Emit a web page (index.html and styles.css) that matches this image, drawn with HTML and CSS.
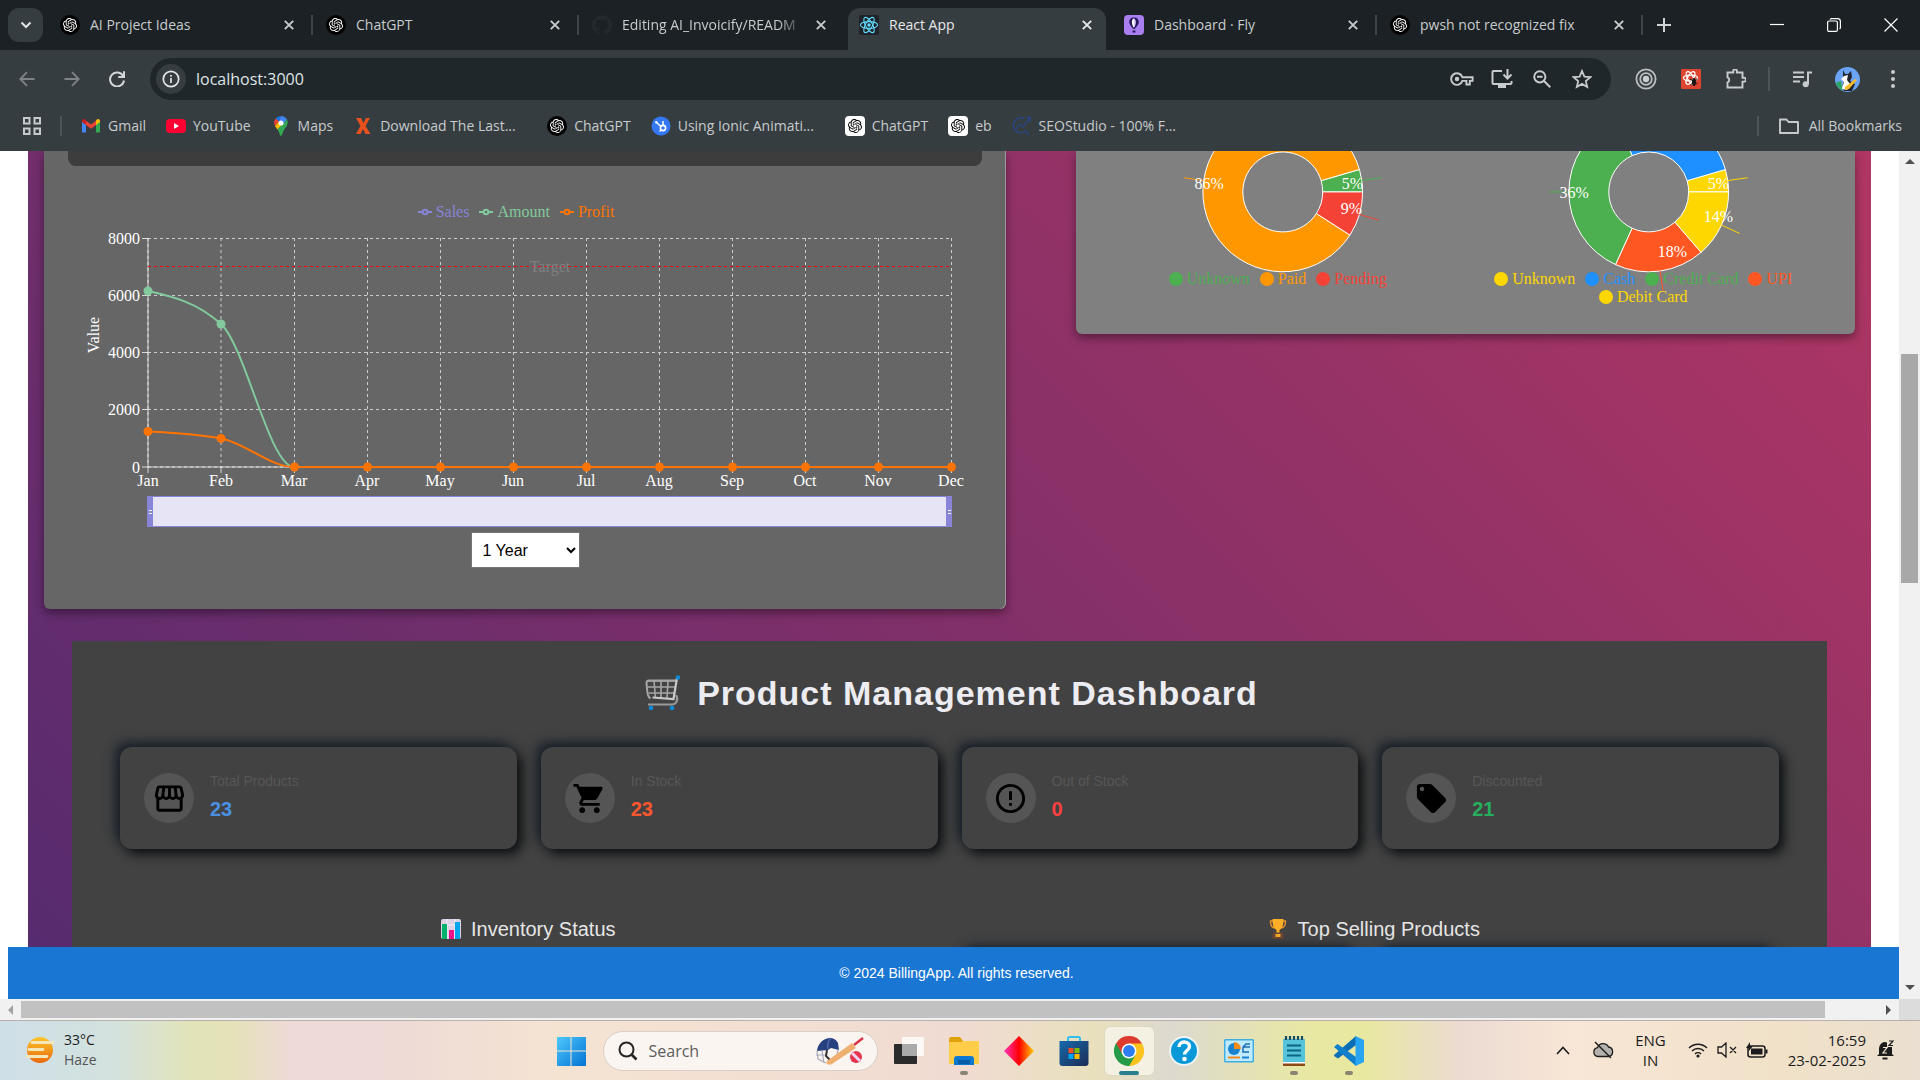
FILE: index.html
```html
<!DOCTYPE html>
<html lang="en">
<head>
<meta charset="utf-8">
<title>React App</title>
<link rel="stylesheet" href="styles.css">
</head>
<body>
<svg class="defs" aria-hidden="true">
  <symbol id="openai" viewBox="0 0 24 24"><path fill="currentColor" d="M22.2819 9.8211a5.9847 5.9847 0 0 0-.5157-4.9108 6.0462 6.0462 0 0 0-6.5098-2.9A6.0651 6.0651 0 0 0 4.9807 4.1818a5.9847 5.9847 0 0 0-3.9977 2.9 6.0462 6.0462 0 0 0 .7427 7.0966 5.98 5.98 0 0 0 .511 4.9107 6.051 6.051 0 0 0 6.5146 2.9001A5.9847 5.9847 0 0 0 13.2599 24a6.0557 6.0557 0 0 0 5.7718-4.2058 5.9894 5.9894 0 0 0 3.9977-2.9001 6.0557 6.0557 0 0 0-.7475-7.0729zm-9.022 12.6081a4.4755 4.4755 0 0 1-2.8764-1.0408l.1419-.0804 4.7783-2.7582a.7948.7948 0 0 0 .3927-.6813v-6.7369l2.02 1.1686a.071.071 0 0 1 .038.052v5.5826a4.504 4.504 0 0 1-4.4945 4.4944zm-9.6607-4.1254a4.4708 4.4708 0 0 1-.5346-3.0137l.142.0852 4.783 2.7582a.7712.7712 0 0 0 .7806 0l5.8428-3.3685v2.3324a.0804.0804 0 0 1-.0332.0615L9.74 19.9502a4.4992 4.4992 0 0 1-6.1408-1.6464zM2.3408 7.8956a4.485 4.485 0 0 1 2.3655-1.9728V11.6a.7664.7664 0 0 0 .3879.6765l5.8144 3.3543-2.0201 1.1685a.0757.0757 0 0 1-.071 0l-4.8303-2.7865A4.504 4.504 0 0 1 2.3408 7.872zm16.5963 3.8558L13.1038 8.364 15.1192 7.2a.0757.0757 0 0 1 .071 0l4.8303 2.7913a4.4944 4.4944 0 0 1-.6765 8.1042v-5.6772a.79.79 0 0 0-.407-.667zm2.0107-3.0231l-.142-.0852-4.7735-2.7818a.7759.7759 0 0 0-.7854 0L9.409 9.2297V6.8974a.0662.0662 0 0 1 .0284-.0615l4.8303-2.7866a4.4992 4.4992 0 0 1 6.6802 4.66zM8.3065 12.863l-2.02-1.1638a.0804.0804 0 0 1-.038-.0567V6.0742a4.4992 4.4992 0 0 1 7.3757-3.4537l-.142.0805L8.704 5.459a.7948.7948 0 0 0-.3927.6813zm1.0976-2.3654l2.602-1.4998 2.6069 1.4998v2.9994l-2.5974 1.4997-2.6067-1.4997Z"/></symbol>
  <symbol id="chatgpt" viewBox="0 0 20 20"><circle cx="10" cy="10" r="10" fill="#000"/><use href="#openai" x="3" y="3" width="14" height="14"/></symbol>
  <symbol id="chatgpt-light" viewBox="0 0 20 20"><rect width="20" height="20" rx="4" fill="#fff"/><use href="#openai" x="3" y="3" width="14" height="14"/></symbol>
  <symbol id="cross" viewBox="0 0 10 10"><path d="M.8.8l8.4 8.4M9.2.8L.8 9.2" stroke="currentColor" stroke-width="1.9" fill="none"/></symbol>
</svg>

<header class="chrome">
  <div class="tabstrip">
    <button class="tab-search" aria-label="Search tabs"><svg width="12" height="8" viewBox="0 0 12 8"><path d="M1.500 1.500L6 6l4.500-4.500" fill="none" stroke="#dfe3e4" stroke-width="2"/></svg></button>
    <div class="tab"><svg class="fav pale"><use href="#chatgpt"/></svg><span class="tab-title">AI Project Ideas</span><button class="tab-close" aria-label="Close tab"><svg><use href="#cross"/></svg></button></div>
    <div class="tab"><svg class="fav pale"><use href="#chatgpt"/></svg><span class="tab-title">ChatGPT</span><button class="tab-close" aria-label="Close tab"><svg><use href="#cross"/></svg></button></div>
    <div class="tab plain"><svg class="fav" viewBox="0 0 24 24"><path fill="#24292e" d="M12 .297c-6.63 0-12 5.373-12 12 0 5.303 3.438 9.800 8.205 11.385.6.113.82-.258.82-.577 0-.285-.01-1.040-.015-2.040-3.338.724-4.042-1.610-4.042-1.610C4.422 18.070 3.633 17.700 3.633 17.700c-1.087-.744.084-.729.084-.729 1.205.084 1.838 1.236 1.838 1.236 1.070 1.835 2.809 1.305 3.495.998.108-.776.417-1.305.76-1.605-2.665-.3-5.466-1.332-5.466-5.930 0-1.310.465-2.380 1.235-3.220-.135-.303-.54-1.523.105-3.176 0 0 1.005-.322 3.300 1.230.96-.267 1.980-.399 3-.405 1.020.006 2.040.138 3 .405 2.280-1.552 3.285-1.230 3.285-1.230.645 1.653.24 2.873.12 3.176.765.84 1.230 1.910 1.230 3.220 0 4.610-2.805 5.625-5.475 5.920.42.36.81 1.096.81 2.220 0 1.606-.015 2.896-.015 3.286 0 .315.21.69.825.57C20.565 22.092 24 17.592 24 12.297c0-6.627-5.373-12-12-12"/></svg><span class="tab-title">Editing AI_Invoicify/READM</span><button class="tab-close" aria-label="Close tab"><svg><use href="#cross"/></svg></button></div>
    <div class="tab active plain"><svg class="fav" viewBox="0 0 20 20"><rect width="20" height="20" rx="2" fill="#20232a"/><g fill="none" stroke="#61dafb" stroke-width="1.100"><ellipse cx="10" cy="10" rx="8.600" ry="3.400"/><ellipse cx="10" cy="10" rx="8.600" ry="3.400" transform="rotate(60 10 10)"/><ellipse cx="10" cy="10" rx="8.600" ry="3.400" transform="rotate(120 10 10)"/></g><circle cx="10" cy="10" r="1.700" fill="#61dafb"/></svg><span class="tab-title">React App</span><button class="tab-close" aria-label="Close tab"><svg><use href="#cross"/></svg></button></div>
    <div class="tab"><svg class="fav" viewBox="0 0 20 20"><rect width="20" height="20" rx="4" fill="#a97ff0"/><path d="M10 2.500c-3 0-4.800 2-4.800 4.600 0 2.400 2.200 4.500 4.100 7h1.400c1.900-2.500 4.100-4.600 4.100-7 0-2.600-1.800-4.600-4.800-4.600z" fill="#24175b"/><path d="M10 3.500c-1.500 0-2.100 2-2.100 3.700 0 2.200 1 4 2.100 5.800z" fill="#fff"/><path d="M10 3.500c1.200.5 1.900 2 1.900 3.700 0 2.200-1 4-1.900 5.800z" fill="#d8c8f8"/><path d="M8.600 15.500h2.800v2H8.600z" fill="#24175b"/></svg><span class="tab-title">Dashboard · Fly</span><button class="tab-close" aria-label="Close tab"><svg><use href="#cross"/></svg></button></div>
    <div class="tab"><svg class="fav pale"><use href="#chatgpt"/></svg><span class="tab-title">pwsh not recognized fix</span><button class="tab-close" aria-label="Close tab"><svg><use href="#cross"/></svg></button></div>
    <button class="new-tab" aria-label="New tab"><svg width="14" height="14" viewBox="0 0 14 14"><path d="M7 0v14M0 7h14" stroke="#cfd3d4" stroke-width="2"/></svg></button>
    <div class="window-controls">
      <button aria-label="Minimize"><svg width="14" height="14" viewBox="0 0 14 14"><path d="M0 6.500h14" stroke="#fff" stroke-width="1.200"/></svg></button>
      <button aria-label="Restore"><svg width="14" height="14" viewBox="0 0 14 14"><path d="M.6 4.500a1.500 1.500 0 0 1 1.500-1.500h6.800a1.500 1.500 0 0 1 1.500 1.500v7.400a1.500 1.500 0 0 1-1.500 1.500H2.100A1.500 1.500 0 0 1 .6 11.900zM3 1.500c.4-.6.9-.9 1.600-.9h6a2.800 2.800 0 0 1 2.800 2.800v6c0 .7-.3 1.300-.9 1.600" fill="none" stroke="#fff" stroke-width="1.200"/></svg></button>
      <button aria-label="Close"><svg width="14" height="14" viewBox="0 0 14 14"><path d="M.5.5l13 13M13.500.5l-13 13" stroke="#fff" stroke-width="1.200"/></svg></button>
    </div>
  </div>

  <div class="toolbar">
    <div class="nav">
      <button class="dim" aria-label="Back"><svg width="16" height="16" viewBox="0 0 16 16"><path d="M15.500 8H1.500M8 1.200L1.300 8 8 14.800" fill="none" stroke="currentColor" stroke-width="1.800"/></svg></button>
      <button class="dim" aria-label="Forward"><svg width="16" height="16" viewBox="0 0 16 16"><path d="M.5 8h14M8 1.200L14.700 8 8 14.800" fill="none" stroke="currentColor" stroke-width="1.800"/></svg></button>
      <button aria-label="Reload"><svg width="16" height="16" viewBox="0 0 16 16"><path d="M14.200 5A7 7 0 1 0 15 9.500M15 .3v5.700H9.300" fill="none" stroke="currentColor" stroke-width="2"/></svg></button>
    </div>
    <div class="omnibox">
      <button class="site-info" aria-label="Site information"><svg width="18" height="18" viewBox="0 0 18 18"><circle cx="9" cy="9" r="7.700" fill="none" stroke="currentColor" stroke-width="1.700"/><path d="M9 8v5M9 5v1.700" stroke="currentColor" stroke-width="1.700"/></svg></button>
      <input type="text" aria-label="Address" value="localhost:3000">
      <button aria-label="Passwords"><svg width="24" height="14" viewBox="0 0 24 14"><path d="M12.400 5.200a5.800 5.800 0 1 0 0 3.700h4v3.600h3.400V8.900h2.800V5.200z" fill="none" stroke="currentColor" stroke-width="1.900"/><circle cx="7" cy="7" r="2.200" fill="currentColor"/></svg></button>
      <button aria-label="Install app"><svg width="22" height="20" viewBox="0 0 22 20"><path d="M11 2H2.500a1 1 0 0 0-1 1v11a1 1 0 0 0 1 1h17a1 1 0 0 0 1-1v-2M16.500 0v9M12.500 5.500l4 4 4-4" fill="none" stroke="currentColor" stroke-width="2"/><path d="M7 15h8v4H7z" fill="currentColor"/></svg></button>
      <button aria-label="Zoom"><svg width="18" height="18" viewBox="0 0 18 18"><circle cx="6.800" cy="6.800" r="5.600" fill="none" stroke="currentColor" stroke-width="2"/><path d="M11 11l6.300 6.300M4 6.800h5.600" stroke="currentColor" stroke-width="2"/></svg></button>
      <button aria-label="Bookmark this tab"><svg width="20" height="20" viewBox="0 0 20 20"><path d="M10 2l2.400 5.600 6 .5-4.600 4 1.400 5.900-5.200-3.100L4.800 18l1.400-5.900-4.600-4 6-.5z" fill="none" stroke="currentColor" stroke-width="1.800"/></svg></button>
    </div>
    <div class="extensions">
      <button aria-label="Recorder"><svg width="22" height="22" viewBox="0 0 22 22"><g fill="none" stroke="#b9bec0" stroke-width="1.800"><circle cx="11" cy="11" r="9.600"/><circle cx="11" cy="11" r="5.800"/></g><circle cx="11" cy="11" r="3.200" fill="#c9cdcf"/></svg></button>
      <button aria-label="React Developer Tools"><svg width="20" height="20" viewBox="0 0 20 20"><rect width="20" height="20" rx="1" fill="#de4530"/><g fill="none" stroke="#fff" stroke-width="1.300"><ellipse cx="9.500" cy="9" rx="7" ry="2.900"/><ellipse cx="9.500" cy="9" rx="7" ry="2.900" transform="rotate(60 9.500 9)"/><ellipse cx="9.500" cy="9" rx="7" ry="2.900" transform="rotate(120 9.500 9)"/></g><ellipse cx="13" cy="13" rx="2" ry="4" fill="#1c1412"/><path d="M9 10l7.500 5M9.500 16l7-6" stroke="#1c1412"/></svg></button>
      <button aria-label="Extensions"><svg width="20" height="20" viewBox="0 0 20 20"><path d="M1.500 3.500h5.800V2a1.800 1.800 0 0 1 3.600 0v1.500h5.600v5.300H18a1.900 1.900 0 0 1 0 3.800h-1.500v5.900h-15v-5a2.800 2.800 0 0 0 0-5.200z" fill="none" stroke="currentColor" stroke-width="1.900"/></svg></button>
      <span class="rule"></span>
      <button aria-label="Media"><svg width="19" height="17" viewBox="0 0 19 17"><path d="M0 1.500h11M0 6h11M0 10.500h7M15 13V1.500h4" fill="none" stroke="currentColor" stroke-width="2"/><circle cx="12.700" cy="13.300" r="3" fill="currentColor"/></svg></button>
      <button aria-label="Profile"><svg width="25" height="25" viewBox="0 0 25 25"><circle cx="12.500" cy="12.500" r="12.500" fill="#6ba3f5"/><path d="M2 15l4-1 2 9.500A12 12 0 0 1 1 17z" fill="#2ea567"/><path d="M8 3l2 4h3l3-3 1 6-2 4 5 3-3 7H9c-3-5 0-8-1-10z" fill="#20242c"/><path d="M9 9l4-1-1 5 3 4-3 6-5-1c0-4 3-6 1-8l-2-2z" fill="#fff"/><path d="M20 12l2 1-8 9-4 1 0-3 4-3z" fill="#f6b92c"/></svg></button>
      <button aria-label="Menu"><svg width="4" height="18" viewBox="0 0 4 18"><g fill="currentColor"><circle cx="2" cy="2" r="2"/><circle cx="2" cy="9" r="2"/><circle cx="2" cy="16" r="2"/></g></svg></button>
    </div>
  </div>

  <nav class="bookmarks">
    <button class="apps" aria-label="Apps"><svg width="18" height="18" viewBox="0 0 18 18"><path d="M1 1h5.500v5.500H1zM11.500 1H17v5.500h-5.500zM1 11.500h5.500V17H1zM11.500 11.500H17V17h-5.500z" fill="none" stroke="currentColor" stroke-width="2"/></svg></button>
    <span class="rule"></span>
    <a href="#"><svg viewBox="0 0 20 20"><path d="M1 5v10.500a1 1 0 0 0 1 1h3V8z" fill="#4285f4"/><path d="M19 5v10.500a1 1 0 0 1-1 1h-3V8z" fill="#34a853"/><path d="M15 4.500V9l4-3V5c0-2-2-2.600-3.200-1.500z" fill="#fbbc04"/><path d="M5 4.800l5 3.800 5-3.800V9l-5 3.800L5 9z" fill="#ea4335"/><path d="M1 5c0-2 2-2.600 3.200-1.500L5 4.500V9L1 6z" fill="#c5221f"/></svg>Gmail</a>
    <a href="#"><svg viewBox="0 0 20 20"><rect y="3" width="20" height="14" rx="4" fill="#f03"/><path d="M8 7v6l5-3z" fill="#fff"/></svg>YouTube</a>
    <a href="#"><svg viewBox="0 0 20 20"><path d="M10 0a7 7 0 0 0-5.400 2.600L8 5.500z" fill="#1a73e8"/><path d="M4.600 2.600A7 7 0 0 0 4 10l4-4.500z" fill="#ea4335"/><path d="M10 0a7 7 0 0 1 6 3.500L11.800 8.500 8 5.500z" fill="#4285f4"/><path d="M4 10c.7 1.300 1.600 2.300 2.400 3.400L12 8.600 8 5.500z" fill="#fbbc04"/><path d="M16 3.500c2 4-.5 7-2.400 9.500C11.500 16 11 20 10 20s-1.300-3.500-3.600-6.600z" fill="#34a853"/><circle cx="10" cy="7" r="2.500" fill="#fff"/></svg>Maps</a>
    <a class="long" href="#"><svg viewBox="0 0 20 20"><path d="M3 2h5l2.500 5L13 2h4l-4.500 8 5 8h-5L10 13l-2.500 5H3l4.500-8z" fill="#e8501e"/></svg>Download The Last...</a>
    <a href="#"><svg class="pale"><use href="#chatgpt"/></svg>ChatGPT</a>
    <a class="long" href="#"><svg viewBox="0 0 20 20"><circle cx="10" cy="10" r="9.500" fill="#3478f6"/><circle cx="12" cy="12" r="2.600" fill="none" stroke="#fff" stroke-width="1.600"/><path d="M12 9V5M10 10.500L5.500 6.500M10.200 14L8.500 15.500" stroke="#fff" stroke-width="1.500"/><circle cx="5.300" cy="6.200" r="1.200" fill="#fff"/></svg>Using Ionic Animati...</a>
    <a href="#"><svg class="ink"><use href="#chatgpt-light"/></svg>ChatGPT</a>
    <a href="#"><svg class="ink"><use href="#chatgpt-light"/></svg>eb</a>
    <a class="long" href="#"><svg viewBox="0 0 20 20"><path d="M12 2.500A7.500 7.500 0 1 0 13 15.500M13 14l4 5M4 13l4-5 3 3 7-9M14 1.500h4.500V6" fill="none" stroke="#2b4680" stroke-width="1.400"/></svg>SEOStudio - 100% F...</a>
    <span class="rule push"></span>
    <a class="all" href="#"><svg viewBox="0 0 20 20"><path d="M1 16V3.500h6.500l2 2.500H19v11H1z" fill="none" stroke="currentColor" stroke-width="1.900" stroke-linejoin="round"/></svg>All Bookmarks</a>
  </nav>
</header>

<div class="viewport">
  <div class="page">
    <main class="scroll">
      <div class="dashboard">
        <div class="top-row">
          <section class="panel trend">
            <div class="trend-bar"></div>
            <ul class="legend">
              <li class="c-sales"><svg viewBox="0 0 14 14"><path d="M0 7h4.700M9.300 7H14" stroke="currentColor" stroke-width="2"/><circle cx="7" cy="7" r="2.300" fill="none" stroke="currentColor" stroke-width="2"/></svg>Sales</li>
              <li class="c-amount"><svg viewBox="0 0 14 14"><path d="M0 7h4.700M9.300 7H14" stroke="currentColor" stroke-width="2"/><circle cx="7" cy="7" r="2.300" fill="none" stroke="currentColor" stroke-width="2"/></svg>Amount</li>
              <li class="c-profit"><svg viewBox="0 0 14 14"><path d="M0 7h4.700M9.300 7H14" stroke="currentColor" stroke-width="2"/><circle cx="7" cy="7" r="2.300" fill="none" stroke="currentColor" stroke-width="2"/></svg>Profit</li>
            </ul>
            <svg class="line-chart" viewBox="68 228 914 302" role="img" aria-label="Sales, amount and profit by month">
              <g stroke="#ccc" stroke-dasharray="3 3" fill="none">
                <path d="M148 238.500h803M148 295.500h803M148 352.500h803M148 409.500h803M148 467h803"/>
                <path d="M148 238v229M221 238v229M294.500 238v229M367.500 238v229M440.500 238v229M513.500 238v229M586.500 238v229M659.500 238v229M732.500 238v229M805.500 238v229M878.500 238v229M951.500 238v229"/>
              </g>
              <g stroke="#fff" stroke-opacity=".75">
                <path d="M148 238v235M142 238.500h6M142 295.500h6M142 352.500h6M142 409.500h6M142 467h809M221 467v6M294.500 467v6M367.500 467v6M440.500 467v6M513.500 467v6M586.500 467v6M659.500 467v6M732.500 467v6M805.500 467v6M878.500 467v6M951.500 467v6"/>
              </g>
              <path d="M148 266.500h803" stroke="#f00" stroke-dasharray="3 3"/>
              <text class="target" x="550" y="272" text-anchor="middle">Target</text>
              <g class="axis" text-anchor="end"><text x="140" y="244">8000</text><text x="140" y="301">6000</text><text x="140" y="358">4000</text><text x="140" y="415">2000</text><text x="140" y="473">0</text></g>
              <g class="axis" text-anchor="middle"><text x="148" y="486">Jan</text><text x="221" y="486">Feb</text><text x="294" y="486">Mar</text><text x="367" y="486">Apr</text><text x="440" y="486">May</text><text x="513" y="486">Jun</text><text x="586" y="486">Jul</text><text x="659" y="486">Aug</text><text x="732" y="486">Sep</text><text x="805" y="486">Oct</text><text x="878" y="486">Nov</text><text x="951" y="486">Dec</text></g>
              <text class="axis" transform="translate(99 335) rotate(-90)" text-anchor="middle">Value</text>
              <path d="M148 291C172.300 296.500 196.700 302 221 324C245.300 346 269.700 467 294 467" fill="none" stroke="#82ca9d" stroke-width="2"/>
              <g fill="#82ca9d"><circle cx="148" cy="291" r="4.500"/><circle cx="221" cy="324" r="4.500"/></g>
              <path d="M148 431.500C172.300 432.600 196.700 434 221 438.400C245.300 442.700 269.700 467 294 467H951" fill="none" stroke="#ff7300" stroke-width="2"/>
              <g fill="#ff7300"><circle cx="148" cy="431.500" r="4.500"/><circle cx="221" cy="438.400" r="4.500"/><circle cx="294.500" cy="467" r="4.500"/><circle cx="367.500" cy="467" r="4.500"/><circle cx="440.500" cy="467" r="4.500"/><circle cx="513.500" cy="467" r="4.500"/><circle cx="586.500" cy="467" r="4.500"/><circle cx="659.500" cy="467" r="4.500"/><circle cx="732.500" cy="467" r="4.500"/><circle cx="805.500" cy="467" r="4.500"/><circle cx="878.500" cy="467" r="4.500"/><circle cx="951.500" cy="467" r="4.500"/></g>
              <rect x="147.500" y="496.500" width="804" height="30" fill="#e6e4f5" stroke="#8884d8"/>
              <path d="M147 496h6v31h-6zM946 496h6v31h-6z" fill="#8884d8"/>
              <path d="M149 510.500h3M149 513.500h3M948 510.500h3M948 513.500h3" stroke="#fff"/>
            </svg>
            <select class="range" aria-label="Time range"><option>1 Year</option><option>6 Months</option></select>
          </section>

          <section class="panel pies">
            <div class="pie">
              <svg viewBox="0 0 366 118" role="img" aria-label="Payment status">
                <g stroke="#fff">
                  <path fill="#4caf50" d="M263 41A80 80 0 0 0 259.800 18.500L221.400 29.700A40 40 0 0 1 223 41Z"/>
                  <path fill="#ff9800" d="M259.800 18.500A80 80 0 1 0 250.300 84.200L216.700 62.600A40 40 0 1 1 221.400 29.700Z"/>
                  <path fill="#f44336" d="M250.300 84.200A80 80 0 0 0 263 41L223 41A40 40 0 0 1 216.700 62.600Z"/>
                </g>
                <path stroke="#4caf50" d="M262.200 29.600L282 26.800"/><path stroke="#ff9800" d="M103.800 29.600L84 26.800"/><path stroke="#f44336" d="M259.800 63.500L279 69.200"/>
                <g class="axis" dominant-baseline="central"><text x="242" y="33">5%</text><text x="124" y="33" text-anchor="end">86%</text><text x="241" y="58">9%</text></g>
              </svg>
              <ul class="legend dots"><li class="c-green">Unknown</li><li class="c-orange">Paid</li><li class="c-red">Pending</li></ul>
            </div>
            <div class="pie">
              <svg viewBox="0 0 366 118" role="img" aria-label="Payment method">
                <g stroke="#fff">
                  <path fill="#ffd700" d="M263 41A80 80 0 0 0 259.800 18.500L221.400 29.700A40 40 0 0 1 223 41Z"/>
                  <path fill="#1e90ff" d="M259.800 18.500A80 80 0 0 0 149.800 -31.800L166.400 4.600A40 40 0 0 1 221.400 29.700Z"/>
                  <path fill="#4caf50" d="M149.800 -31.800A80 80 0 0 0 149.800 113.800L166.400 77.400A40 40 0 0 1 166.400 4.600Z"/>
                  <path fill="#ff5722" d="M149.800 113.800A80 80 0 0 0 235.400 101.500L209.200 71.200A40 40 0 0 1 166.400 77.400Z"/>
                  <path fill="#ffd700" d="M235.400 101.500A80 80 0 0 0 263 41L223 41A40 40 0 0 1 209.200 71.200Z"/>
                </g>
                <path stroke="#ffd700" d="M262.200 29.600L282 26.800M255.800 74.200L274 82.500"/><path stroke="#4caf50" d="M103 41H83"/><path stroke="#ff5722" d="M194.400 120.200L197.300 140"/>
                <g class="axis" dominant-baseline="central"><text x="242" y="33">5%</text><text x="123" y="42" text-anchor="end">36%</text><text x="192" y="101">18%</text><text x="238" y="66">14%</text></g>
              </svg>
              <ul class="legend dots"><li class="c-yellow">Unknown</li><li class="c-blue">Cash</li><li class="c-green">Credit Card</li><li class="c-upi">UPI</li><li class="c-yellow">Debit Card</li></ul>
            </div>
          </section>
        </div>

        <section class="products">
          <h1><svg width="36" height="36" viewBox="0 0 36 36"><g fill="none" stroke="#a6a6a6" stroke-width="1.600"><path d="M2 6h29M3 12h27M4 18h25M9 6l1.500 17M16 6v17M23 6l-1 17"/><path d="M5.500 23.500c-2-1-2.700-3.500-3.200-7L1.500 8c0-2 1-2.500 2.500-2.500h27" stroke-width="2"/></g><path d="M32 3l-3.500 21-21-1.500" fill="none" stroke="#c9c9c9" stroke-width="2.200"/><path d="M31 20c3 5 0 9.500-4 9.500H3" fill="none" stroke="#999" stroke-width="2.200"/><g fill="#0e8ad6"><circle cx="33" cy="2.500" r="2.300"/><circle cx="6" cy="33" r="2.300"/><circle cx="27" cy="33" r="2.300"/></g></svg>Product Management Dashboard</h1>
          <div class="stats">
            <article class="card"><span class="badge"><svg viewBox="0 0 24 24"><path d="M21.900 8.890l-1.050-4.370c-.22-.9-1-1.520-1.910-1.520H5.050c-.9 0-1.690.63-1.900 1.520L2.100 8.890c-.24 1.020-.02 2.060.62 2.880.08.11.19.19.28.29V19c0 1.100.9 2 2 2h14c1.100 0 2-.9 2-2v-6.940c.09-.09.2-.18.28-.28.64-.82.87-1.870.62-2.890zm-2.990-3.900l1.050 4.370c.1.42.01.84-.25 1.170-.14.18-.44.47-.94.47-.61 0-1.140-.49-1.210-1.140L16.980 5l1.930-.01zM13 5h1.960l.54 4.520c.05.39-.07.78-.33 1.070-.22.26-.54.41-.95.41-.67 0-1.220-.59-1.220-1.310V5zM8.490 9.520L9.040 5H11v4.690c0 .72-.55 1.310-1.290 1.310-.34 0-.65-.15-.89-.41-.25-.29-.37-.68-.33-1.070zm-4.450-.16L5.050 5h1.970l-.58 4.860c-.08.65-.6 1.140-1.210 1.140-.49 0-.8-.29-.93-.47-.27-.32-.36-.75-.26-1.170zM5 19v-6.030c.08.01.15.03.23.03.87 0 1.660-.36 2.240-.95.6.6 1.400.95 2.310.95.87 0 1.650-.36 2.230-.93.59.57 1.390.93 2.290.93.84 0 1.640-.35 2.240-.95.58.59 1.370.95 2.240.95.08 0 .15-.02.23-.03V19H5z"/></svg></span><div><h2>Total Products</h2><p class="v-blue">23</p></div></article>
            <article class="card"><span class="badge"><svg viewBox="0 0 24 24"><path d="M7 18c-1.100 0-1.990.9-1.990 2S5.900 22 7 22s2-.9 2-2-.9-2-2-2zM1 2v2h2l3.600 7.590-1.350 2.450c-.16.28-.25.61-.25.96 0 1.100.9 2 2 2h12v-2H7.420c-.14 0-.25-.11-.25-.25l.03-.12.9-1.630h7.450c.75 0 1.410-.41 1.750-1.030l3.580-6.490c.08-.14.12-.31.12-.48 0-.55-.45-1-1-1H5.210l-.94-2H1zm16 16c-1.100 0-1.990.9-1.990 2s.89 2 1.990 2 2-.9 2-2-.9-2-2-2z"/></svg></span><div><h2>In Stock</h2><p class="v-orange">23</p></div></article>
            <article class="card"><span class="badge"><svg viewBox="0 0 24 24"><path d="M11 15h2v2h-2zm0-8h2v6h-2zm.99-5C6.470 2 2 6.480 2 12s4.470 10 9.990 10C17.520 22 22 17.520 22 12S17.520 2 11.990 2zM12 20c-4.420 0-8-3.580-8-8s3.580-8 8-8 8 3.580 8 8-3.580 8-8 8z"/></svg></span><div><h2>Out of Stock</h2><p class="v-red">0</p></div></article>
            <article class="card"><span class="badge"><svg viewBox="0 0 24 24"><path d="M21.410 11.580l-9-9C12.050 2.220 11.550 2 11 2H4c-1.100 0-2 .9-2 2v7c0 .55.22 1.050.59 1.420l9 9c.36.36.86.58 1.410.58s1.050-.22 1.410-.59l7-7c.37-.36.59-.86.59-1.410s-.23-1.060-.59-1.420zM5.500 7C4.670 7 4 6.330 4 5.500S4.670 4 5.500 4 7 4.670 7 5.500 6.330 7 5.500 7z"/></svg></span><div><h2>Discounted</h2><p class="v-green">21</p></div></article>
          </div>
          <div class="details">
            <div><h2><svg width="26" height="22" viewBox="0 0 26 22"><rect x="3" y="1" width="20" height="20" rx="2" fill="#dcd2e4"/><path d="M9 1v20M17 1v20M3 7h20" stroke="#f4eef8"/><rect x="4" y="6" width="5" height="15" fill="#00b26b"/><rect x="11" y="12" width="5" height="9" fill="#f0148c"/><rect x="17" y="4" width="5" height="17" fill="#00a6ed"/></svg>Inventory Status</h2></div>
            <div><h2><svg width="26" height="22" viewBox="0 0 26 22"><path d="M8 3H5.500c0 4 1 6.500 4 7M18 3h2.500c0 4-1 6.500-4 7" fill="none" stroke="#e8912a" stroke-width="1.500"/><path d="M7.500 1h11c0 6-1 9.500-4 11v3h-3v-3c-3-1.500-4-5-4-11z" fill="#fcae28"/><path d="M8 14.500h10l1 6.500H7z" fill="#6d4534"/><rect x="10.500" y="16" width="5" height="3" fill="#fcae28"/></svg>Top Selling Products</h2>
              <div class="top-products"><article class="card"></article><article class="card"></article></div>
            </div>
          </div>
        </section>
      </div>
    </main>
    <footer class="site-footer">© 2024 BillingApp. All rights reserved.</footer>
  </div>
  <div class="vbar"><span class="arrow up"></span><span class="vthumb"></span><span class="arrow down"></span></div>
</div>
<div class="hbar"><span class="arrow left"></span><span class="hthumb"></span><span class="arrow right"></span><span class="corner"></span></div>

<div class="taskbar">
  <button class="weather">
    <svg width="30" height="28" viewBox="0 0 30 28"><defs><linearGradient id="sun" x1="0" y1="0" x2="0" y2="1"><stop offset="0" stop-color="#fbc52b"/><stop offset="1" stop-color="#e9690c"/></linearGradient></defs><circle cx="15" cy="14" r="13" fill="url(#sun)"/><path d="M7 6.500h21M4 13.500h14M2 20.500h20" stroke="#f3e6b8" stroke-width="2.800" stroke-linecap="round"/></svg>
    <span><b>33°C</b><small>Haze</small></span>
  </button>
  <div class="dock">
    <button class="app" aria-label="Start"><svg width="30" height="30" viewBox="0 0 30 30"><defs><linearGradient id="win" x1="0" y1="0" x2="1" y2="1"><stop offset="0" stop-color="#4cc8fd"/><stop offset="1" stop-color="#0473d2"/></linearGradient></defs><path d="M1 1h13.500v13.500H1zM15.500 1H30v13.500H15.500zM1 15.500h13.500V30H1zM15.500 15.500H30V30H15.500z" fill="url(#win)"/></svg></button>
    <label class="search">
      <svg width="20" height="20" viewBox="0 0 20 20"><circle cx="8.500" cy="8.500" r="7" fill="none" stroke="#262626" stroke-width="2"/><path d="M13.500 13.500l5 5" stroke="#262626" stroke-width="2.600"/></svg>
      <input type="text" placeholder="Search" aria-label="Search">
      <svg width="50" height="30" viewBox="0 0 50 30"><path d="M3 15C4 3 19-3 24 7l1 7-8-2-3 2z" fill="#27407e"/><path d="M17 2c-3 3-4 6-3 11" fill="none" stroke="#4c68b0" stroke-width="1.500"/><path d="M3 15l1 8 8 4M2 19h9M8 15l2 12M24 14l-2 9-8 4" fill="none" stroke="#aab" stroke-width="1.200"/><path d="M13 14l-1 6 4 4" stroke="#333" fill="none" stroke-width="2"/><path d="M13 25L38 7l4 5-24 16c-4 2-7-1-5-3z" fill="#eeb070"/><path d="M40 9l9-7" stroke="#d93648" stroke-width="2.500"/><circle cx="42" cy="21" r="6" fill="#e5354f"/><path d="M38 17l8 8" stroke="#f0d5f5" stroke-width="3"/></svg>
    </label>
    <button class="app" aria-label="Task view"><svg width="30" height="30" viewBox="0 0 30 30"><rect x="0" y="8" width="23" height="20" rx="1" fill="#2b2b2b"/><rect x="8" y="1" width="22" height="19" rx="1" fill="#fff" fill-opacity=".8"/><path d="M8 8h15v12H8z" fill="#aaa"/></svg></button>
    <button class="app open" aria-label="File Explorer"><svg width="30" height="28" viewBox="0 0 30 28"><path d="M0 2a2 2 0 0 1 2-2h9l3 4h14a2 2 0 0 1 2 2v6H0z" fill="#dfa20c"/><path d="M0 5h12l2-1h16v22a1 1 0 0 1-1 1H1a1 1 0 0 1-1-1z" fill="#ffcd48"/><path d="M5 28v-6a3 3 0 0 1 3-3h14a3 3 0 0 1 3 3v6z" fill="#0c78cf"/><path d="M9 23h12v4H9z" fill="#075ca8"/></svg></button>
    <button class="app" aria-label="Diamond"><svg width="30" height="30" viewBox="0 0 30 30"><defs><linearGradient id="dia"><stop offset="0" stop-color="#f3b"/><stop offset=".5" stop-color="#f00"/><stop offset="1" stop-color="#fc0"/></linearGradient></defs><path d="M15 0l15 15-15 15L0 15z" fill="url(#dia)"/></svg></button>
    <button class="app" aria-label="Microsoft Store"><svg width="30" height="30" viewBox="0 0 30 30"><defs><linearGradient id="store" x1="0" y1="0" x2="1" y2="1"><stop offset="0" stop-color="#1469ac"/><stop offset="1" stop-color="#1e2c55"/></linearGradient></defs><path d="M9 6V2.500A1.500 1.500 0 0 1 10.500 1h9A1.500 1.500 0 0 1 21 2.500V6" fill="none" stroke="#2fc1ee" stroke-width="2"/><path d="M.5 5h29v22a3 3 0 0 1-3 3h-23a3 3 0 0 1-3-3z" fill="url(#store)"/><path d="M9.500 12h5v5h-5z" fill="#f25022"/><path d="M15.500 12h5v5h-5z" fill="#7fba00"/><path d="M9.500 18h5v5h-5z" fill="#00a4ef"/><path d="M15.500 18h5v5h-5z" fill="#ffb900"/></svg></button>
    <button class="app current" aria-label="Google Chrome"><svg width="30" height="30" viewBox="0 0 48 48"><path d="M24 24L3.200 12A24 24 0 0 1 44.800 12z" fill="#dd3b2e"/><path d="M24 24L44.800 12A24 24 0 0 1 24 48z" fill="#fcc31e"/><path d="M24 24v24A24 24 0 0 1 3.200 12z" fill="#259b48"/><path d="M24 12h20.800L34.400 30z" fill="#fcc31e"/><path d="M34.400 30L24 48 13.600 30z" fill="#259b48"/><path d="M13.600 30L3.200 12 24 12z" fill="#dd3b2e"/><path d="M13.600 30L3.200 12c-1 2-2 5-1 14l14 20 7.800 2L34 30z" fill="#259b48"/><circle cx="24" cy="24" r="12" fill="#fff"/><circle cx="24" cy="24" r="9.500" fill="#2d7df0"/></svg></button>
    <button class="app" aria-label="Help"><svg width="30" height="30" viewBox="0 0 30 30"><circle cx="15" cy="15" r="14" fill="#0a99d8" stroke="#eef4f6" stroke-width="2"/><path d="M10 11c0-3 2-5 5.200-5s5.300 1.800 5.300 4.500c0 4-5 4-5 8" fill="none" stroke="#fff" stroke-width="3.400"/><circle cx="15.500" cy="23" r="2.300" fill="#fff"/></svg></button>
    <button class="app" aria-label="Control Panel"><svg width="30" height="24" viewBox="0 0 30 24"><rect x=".7" y=".7" width="28.600" height="22" rx="1" fill="#bfeaff" stroke="#3eaee2" stroke-width="1.500"/><circle cx="10" cy="10" r="6" fill="#1a82cf"/><path d="M10 10V3a7 7 0 0 1 7 7z" fill="#f38b18"/><path d="M19 8l3-3h4M19 8h7M19 8v5h6" fill="none" stroke="#1a6fb5" stroke-width="1.500"/><path d="M4 18.500h12" stroke="#f38b18" stroke-width="2"/><path d="M18 18.500h7" stroke="#1a82cf" stroke-width="2"/></svg></button>
    <button class="app open" aria-label="Notepad"><svg width="24" height="30" viewBox="0 0 24 30"><path d="M1 3h22v24H1z" fill="#55c3dc"/><path d="M1 27h22v3H1z" fill="#8c4a15"/><path d="M1 26h22v1.500H1z" fill="#fff"/><path d="M4 0v4M8 0v4M12 0v4M16 0v4M20 0v4" stroke="#134c63" stroke-width="2.200"/><path d="M5 9.500h14M5 14.500h14M5 19.500h14" stroke="#0d6580" stroke-width="2"/></svg></button>
    <button class="app open" aria-label="Visual Studio Code"><svg width="30" height="30" viewBox="0 0 30 30"><path d="M22 0v9L4 22.500 0 20v-1z" fill="#0b6fb8"/><path d="M0 11l3.500-3L22 21v9z" fill="#1080cc"/><path d="M21.500 0L30 4v22l-8.500 4z" fill="#28a5f2"/></svg></button>
  </div>
  <div class="tray">
    <button aria-label="Show hidden icons"><svg width="14" height="9" viewBox="0 0 14 9"><path d="M1 8l6-6.500L13 8" fill="none" stroke="#1c1c1c" stroke-width="1.600"/></svg></button>
    <button class="cloud" aria-label="OneDrive"><svg width="22" height="18" viewBox="0 0 22 18"><path d="M6 15.500a4.500 4.500 0 0 1-.5-8.900A6 6 0 0 1 16.500 6a4.800 4.800 0 0 1 0 9.500z" fill="#b5b2ae" stroke="#1c1c1c" stroke-width="1.300"/><path d="M3 1l16 16" stroke="#1c1c1c" stroke-width="1.500"/></svg></button>
    <button class="lang">ENG<br>IN</button>
    <button class="status" aria-label="Network, volume and battery">
      <svg width="20" height="16" viewBox="0 0 20 16"><g fill="none" stroke="#1c1c1c" stroke-width="1.500"><path d="M1 6a12.700 12.700 0 0 1 18 0M4 9a8.500 8.500 0 0 1 12 0M7 12a4.300 4.300 0 0 1 6 0"/></g><circle cx="10" cy="14" r="1.600" fill="#1c1c1c"/></svg>
      <svg width="20" height="16" viewBox="0 0 20 16"><path d="M1 5h3.500L9 1v14l-4.500-4H1zM13 5l6 6M19 5l-6 6" fill="none" stroke="#1c1c1c" stroke-width="1.300"/></svg>
      <svg width="22" height="16" viewBox="0 0 22 16"><rect x="2" y="4" width="17" height="11" rx="2.500" fill="none" stroke="#1c1c1c" stroke-width="1.500"/><path d="M5 6.500h11.500v6H5z" fill="#1c1c1c"/><path d="M20.500 7.500v4" stroke="#1c1c1c" stroke-width="2"/><path d="M4 0L0 6h3l-1 4 5-6H4z" fill="#1c1c1c"/></svg>
    </button>
    <button class="clock">16:59<br>23-02-2025</button>
    <button class="bell" aria-label="Notifications"><svg width="18" height="20" viewBox="0 0 18 20"><path d="M2 14V8a6 6 0 0 1 8-5.500V7h5v7l2 2H0z" fill="#1c1c1c"/><path d="M5.500 18.500h5" stroke="#1c1c1c" stroke-width="2"/><path d="M12 1h4l-4 4.500h4" fill="none" stroke="#1c1c1c" stroke-width="1.200"/><path d="M6 7.500h4L6 13h4" fill="none" stroke="#f4e6d6" stroke-width="1.200"/></svg></button>
  </div>
</div>
</body>
</html>
```
FILE: styles.css
```css
* { box-sizing: border-box; }
html, body { height: 100%; margin: 0; }
body {
  display: flex;
  flex-direction: column;
  overflow: hidden;
  background: #fff;
  font-family: "Liberation Sans", sans-serif;
}
h1, h2, p, ul { margin: 0; padding: 0; }
button, input {
  font: inherit;
  color: inherit;
  background: none;
  border: 0;
  padding: 0;
  outline: 0;
}
button { display: grid; place-items: center; }
svg { display: block; flex: none; }
.defs { position: absolute; width: 0; height: 0; }

/* Browser frame */
.chrome {
  flex: none;
  background: #363d40;
  color: #c7cbcd;
  font: 14px/20px "Open Sans", "Noto Sans", sans-serif;
}
.tabstrip {
  display: flex;
  align-items: center;
  height: 50px;
  padding-left: 8px;
  background: #1b2124;
}
.tab-search {
  width: 35px;
  height: 34px;
  margin-right: 3px;
  border-radius: 11px;
  background: #363d40;
}
.tab {
  position: relative;
  display: flex;
  align-items: center;
  gap: 10px;
  flex: 0 1 266px;
  min-width: 0;
  height: 42px;
  padding: 0 16px 8px 14px;
  align-self: flex-end;
}
.tab::after {
  content: "";
  position: absolute;
  right: -1px;
  width: 2px;
  height: 20px;
  background: #3c4447;
}
.tab.plain::after { display: none; }
.tab.active {
  flex-basis: 258px;
  margin: 0 4px;
  padding: 0 12px 8px 11px;
  color: #e6e8e9;
  background: #363d40;
  border-radius: 12px 12px 0 0;
}
.fav { width: 20px; height: 20px; }
.pale { color: #fff; }
.ink { color: #000; }
.tab-title {
  flex: 1;
  overflow: hidden;
  white-space: nowrap;
}
.tab.plain:not(.active) .tab-title { -webkit-mask-image: linear-gradient(to right, #000 86%, transparent); mask-image: linear-gradient(to right, #000 86%, transparent); }
.tab-close { width: 14px; height: 20px; }
.tab-close svg { width: 10px; height: 10px; }
.new-tab { width: 44px; height: 40px; }
.window-controls { display: flex; margin-left: auto; padding-right: 1px; }
.window-controls button { width: 57px; height: 40px; }

.toolbar {
  display: flex;
  align-items: center;
  height: 58px;
  padding: 0 5px 0 4px;
}
.nav { display: flex; }
.nav button { width: 45px; height: 36px; color: #d2d6d8; }
.nav .dim { color: #7d8386; }
.omnibox {
  flex: 1;
  display: flex;
  align-items: center;
  height: 42px;
  margin-left: 11px;
  padding: 0 9px 0 6px;
  border-radius: 21px;
  background: #20272a;
}
.omnibox input {
  flex: 1;
  min-width: 0;
  margin-left: 10px;
  font-size: 16px;
  line-height: 24px;
  color: #dfe3e5;
}
.omnibox button { width: 40px; height: 30px; }
.omnibox .site-info { width: 30px; border-radius: 50%; background: #363d40; color: #e3e6e8; }
.extensions { display: flex; align-items: center; margin-left: 12px; }
.extensions button { width: 45px; height: 36px; }
.rule { flex: none; width: 2px; height: 24px; background: #4c5457; }
.extensions .rule { margin: 0 10px; }

.bookmarks {
  display: flex;
  align-items: center;
  height: 43px;
  padding: 0 18px 8px 23px;
}
.bookmarks .rule { height: 20px; margin: 0 19px; }
.bookmarks .push { margin: 0 20px 0 auto; }
.bookmarks a {
  display: flex;
  align-items: center;
  gap: 7px;
  margin-right: 20px;
  color: inherit;
  text-decoration: none;
  white-space: nowrap;
}
.bookmarks .long { min-width: 174px; }
.bookmarks a svg { width: 20px; height: 20px; }
.bookmarks .all { gap: 10px; margin-right: 0; }

/* Page area */
.viewport { flex: 1; min-height: 0; display: flex; }
.page { flex: 1; min-width: 0; display: flex; flex-direction: column; }
.scroll { flex: 1; min-height: 0; overflow: hidden; padding: 0 28px; }
.dashboard {
  padding: 0 16px 48px;
  background: linear-gradient(45deg, #4f2a70, #7b2f6a 45%, #b03663);
}
.top-row {
  display: grid;
  grid-template-columns: 962fr 779fr;
  gap: 70px;
  align-items: start;
}
.panel {
  border-radius: 0 0 6px 6px;
  box-shadow: 0 4px 10px rgba(0, 0, 0, .4);
}
.trend {
  padding: 0 24px 41px;
  background: #666;
  box-shadow: inset -1px 0 #999, 0 4px 10px rgba(0, 0, 0, .4);
}
.trend-bar { height: 15px; border-radius: 0 0 8px 8px; background: #3d3d3d; }
.legend {
  display: flex;
  flex-wrap: wrap;
  justify-content: center;
  list-style: none;
  font: 16px/18px "Liberation Serif", serif;
}
.legend li { display: flex; align-items: center; gap: 4px; margin-right: 10px; }
.trend .legend { padding: 37px 8px 7px 0; }
.legend svg { width: 14px; height: 14px; }
.dots { padding-top: 1px; }
.dots li::before {
  content: "";
  width: 14px;
  height: 14px;
  border-radius: 50%;
  background: currentColor;
}
.line-chart { width: 100%; height: auto; }
.line-chart text, .pie text { font: 16px "Liberation Serif", serif; }
.axis { fill: #fff; }
.target { fill: #808080; }
.c-sales { color: #8884d8; }
.c-amount { color: #82ca9d; }
.c-profit { color: #ff7300; }
.c-green { color: #4caf50; }
.c-orange { color: #ff9800; }
.c-red { color: #f44336; }
.c-yellow { color: #ffd700; }
.c-blue { color: #1e90ff; }
.c-upi { color: #ff5722; }
.range {
  display: block;
  width: 109px;
  height: 36px;
  margin: 2px auto 0;
  padding: 0 7px;
  border: 1px solid #767676;
  border-radius: 0;
  background: #fff;
  color: #000;
  font: 16px "Liberation Sans", sans-serif;
}
.pies {
  display: grid;
  grid-template-columns: 1fr 1fr;
  padding: 0 24px 28px;
  background: #808080;
}
.pie svg { width: 100%; height: auto; overflow: visible; }

.products {
  margin: 32px 28px 0;
  padding: 30px 48px 64px;
  background: #424242;
}
.products h1 {
  display: flex;
  align-items: center;
  justify-content: center;
  gap: 16px;
  margin-bottom: 32px;
  padding-left: 4px;
  font-size: 34px;
  line-height: 44px;
  letter-spacing: 1px;
  color: #ececf1;
}
.stats { display: grid; grid-template-columns: repeat(4, 1fr); gap: 24px; }
.card {
  display: flex;
  align-items: center;
  gap: 16px;
  height: 102px;
  padding: 0 24px;
  border-radius: 12px;
  background: #424242;
  box-shadow: 5px 5px 12px #0d0f11, -5px -5px 12px #1a222b;
}
.badge {
  display: grid;
  place-items: center;
  width: 50px;
  height: 50px;
  border-radius: 50%;
  background: #555;
}
.badge svg { width: 35px; height: 35px; fill: #000; }
.card h2 { font-size: 14px; font-weight: 400; line-height: 20px; color: #575757; }
.card p { margin: 6px 0 4px; font-size: 20px; font-weight: 700; line-height: 24px; }
.v-blue { color: #4a90e2; }
.v-orange { color: #ff5630; }
.v-red { color: #ff4040; }
.v-green { color: #27ae60; }
.details {
  display: grid;
  grid-template-columns: 1fr 1fr;
  gap: 32px;
  margin-top: 66px;
}
.details > div > h2 {
  display: flex;
  align-items: center;
  justify-content: center;
  gap: 7px;
  font-size: 20px;
  font-weight: 400;
  line-height: 28px;
  color: #e6e6e6;
}
.top-products { display: grid; grid-template-columns: 1fr 1fr; gap: 24px; margin-top: 8px; }

.site-footer {
  flex: none;
  margin-left: 8px;
  padding: 0 0 0 6px;
  background: #1976d2;
  color: #fff;
  font-size: 14px;
  line-height: 52px;
  text-align: center;
}

/* Scroll bars */
.vbar {
  flex: none;
  display: flex;
  flex-direction: column;
  align-items: center;
  width: 21px;
  padding: 8px 0 9px;
  background: #f1f1f1;
}
.vthumb { width: 17px; height: 229px; margin: 190px 0 auto; background: #a8a8a8; }
.hbar {
  flex: none;
  display: flex;
  align-items: center;
  height: 21px;
  padding-left: 8px;
  background: #f1f1f1;
}
.hthumb { flex: 1; height: 17px; margin: 0 61px 0 8px; background: #c1c1c1; }
.corner { width: 21px; height: 21px; background: #dcdcdc; margin-left: 8px; }
.arrow { border: 5px solid transparent; }
.up { border-top: 0; border-bottom-color: #505050; }
.down { border-bottom: 0; border-top-color: #505050; }
.left { border-left: 0; border-right-color: #a3a3a3; }
.right { border-right: 0; border-left-color: #505050; }

/* Taskbar */
.taskbar {
  flex: none;
  display: grid;
  grid-template-columns: 1fr auto 1fr;
  align-items: center;
  height: 60px;
  border-top: 1px solid #b9b0ab;
  background: linear-gradient(to right, #cfdfe8 0, #d3e2dd 6%, #e2e3b8 10%, #e4e2b8 12%, #eedad6 15%, #eedad6 20%, #f5e3d2 29%, #f0dbd2 50%, #e8e0bd 57%, #ddd9cf 61%, #e8e8a4 68%, #e8e8a0 71%, #ecdbd2 76%, #f8e6d6 82%, #f0e1c8 93%, #eadfd0 100%);
  color: #1c1c1c;
  font: 14px/20px "Open Sans", "Noto Sans", sans-serif;
}
.weather {
  display: flex;
  align-items: center;
  gap: 9px;
  margin-left: 25px;
  padding-bottom: 2px;
  text-align: left;
}
.weather b, .weather small { display: block; font-size: 14px; font-weight: 400; }
.weather small { color: #555; }
.dock { display: flex; align-items: center; }
.app { position: relative; width: 55px; height: 48px; }
.app.current {
  width: 49px;
  margin: 0 3px;
  border-radius: 5px;
  background: #f4f1e2;
  box-shadow: 0 0 1px #b8b4a8;
}
.open::after, .current::after {
  content: "";
  position: absolute;
  bottom: 0;
  width: 8px;
  height: 4px;
  border-radius: 2px;
  background: #8a8474;
}
.current::after { width: 20px; background: #28808e; }
.search {
  display: flex;
  align-items: center;
  width: 275px;
  height: 40px;
  margin: 0 4px;
  padding: 0 13px 0 14px;
  border: 1px solid #d9cfc8;
  border-radius: 20px;
  background: #fbf5f1;
}
.search input { flex: 1; min-width: 0; margin-left: 11px; font-size: 16px; }
.search input::placeholder { color: #5c5c5c; opacity: 1; }
.tray {
  display: flex;
  align-items: center;
  justify-content: flex-end;
  padding: 0 25px 1px 0;
  font-size: 15px;
}
.tray .cloud { margin-left: 22px; }
.tray .lang { margin-left: 21px; text-align: center; }
.tray .status { display: flex; gap: 9px; margin-left: 22px; }
.tray .clock { text-align: right; margin-left: 20px; }
.tray .bell { margin-left: 11px; }
```
